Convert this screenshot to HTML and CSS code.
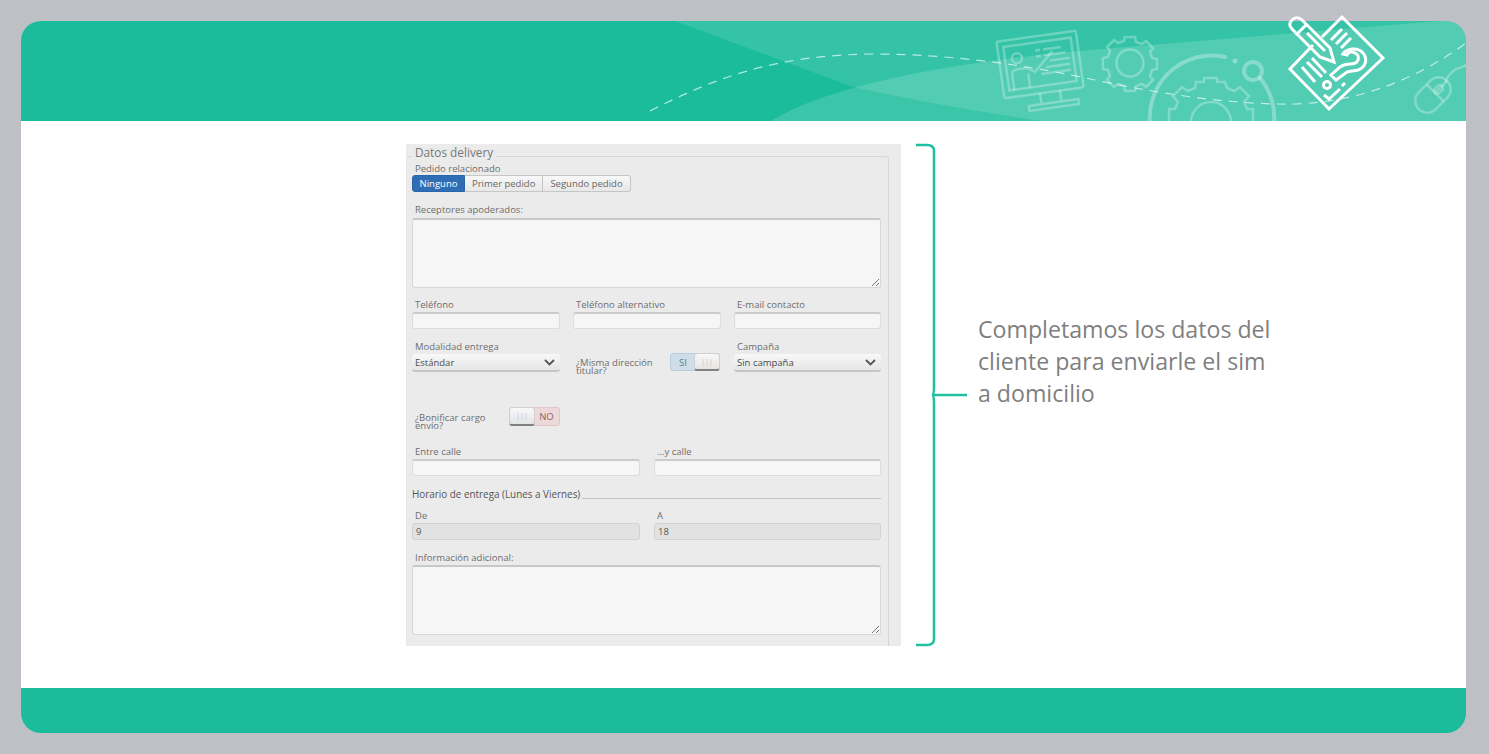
FILE: index.html
```html
<!DOCTYPE html>
<html>
<head>
<title>Datos delivery</title>
<link rel="stylesheet" href="styles.css">
</head>
<body>

<div class="slide">
  <svg class="slide-header" width="1445" height="100" viewBox="21 21 1445 100">
    <defs>
      <clipPath id="header-clip">
        <path d="M21 121V41a20 20 0 0 1 20-20H1446a20 20 0 0 1 20 20V121Z"/>
      </clipPath>
    </defs>
    <g clip-path="url(#header-clip)">
      <rect x="21" y="21" width="1445" height="100" fill="#1bbc9b"/>
      <path d="M675 21L853 87Q950 108 1042 121H1466V21Z" fill="#fff" fill-opacity=".11"/>
      <path d="M770 121C830 85 950 62 1090 50L1440 21H1466V121Z" fill="#fff" fill-opacity=".15"/>
      <path class="dash" d="M650 111C720 75 780 55 873 54C960 54 1040 68 1095 80C1170 96 1240 105 1295 104C1360 102 1420 78 1470 40"/>

      <!-- monitor -->
      <g class="faint" transform="rotate(-8 1040 64)">
        <rect x="1000" y="36" width="80" height="57" rx="2"/>
        <rect x="1006" y="42" width="68" height="44"/>
        <circle cx="1018" cy="55" r="5"/>
        <path d="M1011 86V71q0-5 6-5h9l8 5 20-18M1027 72V86"/>
        <path d="M1037 50h5M1045 50h18M1037 56h5M1045 56h22M1050 62h20M1045 68h25M1040 74h30"/>
        <path d="M1036 93V103M1056 93V103M1023 104h50v5h-50Z"/>
      </g>

      <!-- small gear -->
      <g class="faint">
        <circle cx="1130" cy="63" r="13.500"/>
        <path d="M1125 37h10l1 5 6 2 4-3 7 7-3 4 2 6 5 1v10l-5 1-2 6 3 4-7 7-4-3-6 2-1 5h-10l-1-5-6-2-4 3-7-7 3-4-2-6-5-1V58l5-1 2-6-3-4 7-7 4 3 6-2Z"/>
      </g>

      <!-- big gear and ring -->
      <g class="ring">
        <path d="M1151 130A62 62 0 0 1 1225 57"/>
        <path d="M1260 78A62 62 0 0 1 1273 130"/>
        <circle cx="1253" cy="71" r="9"/>
      </g>
      <circle cx="1235" cy="61" r="2.500" fill="#fff" fill-opacity=".35"/>
      <g class="faint">
        <path d="M1169 130V109h6l3-7-5-6 9-9 6 4 7-3 1-6h8v-4h13v4h8l2 6 7 3 6-4 9 9-5 6 3 7h6v21"/>
        <circle cx="1211" cy="122" r="20"/>
      </g>

      <!-- mouse -->
      <g class="faint" transform="rotate(45 1433 95)">
        <rect x="1421" y="75" width="24" height="40" rx="12"/>
        <path d="M1421 92H1445M1433 75V92"/>
        <rect x="1430" y="82" width="6" height="10" rx="3"/>
      </g>
      <path class="faint" d="M1445 82q6-12 14-14 5-1 9-4"/>
    </g>

    <!-- main icon, goes over the top edge -->
    <g class="main-icon">
      <path d="M1322 37L1342 17 1383 58 1329 109 1290 69 1313 45"/>
      <path d="M1292 29c-3-3-3-6 0-9 3-3 7-3 10 0l28 28 4 14-14-5Z"/>
      <path d="M1296 35l11-11M1307 33l18 18"/>
      <path d="M1331 40l11-11M1336 44l11-11M1341 48l10-10"/>
      <path d="M1302 67l13 15M1307 62l15 15M1312 58l14 15"/>
      <path d="M1343 54c4-6 15-7 20-1 5 6 3 14-5 17-4 1-8 1-11 2l-11 8-5-5 9-8c3-2 7-3 10-3 4 0 7-1 8-4 1-3 0-6-3-7-3-2-7-1-8 2Z"/>
      <circle cx="1327" cy="85" r="3.500"/>
      <path d="M1324 95l5 4 11-10M1342 86l3-3"/>
    </g>
  </svg>

  <div class="slide-body">
    <div class="panel">
      <fieldset class="delivery">
        <legend>Datos delivery</legend>

        <label class="lbl lbl-first">Pedido relacionado</label>
        <div class="btn-group">
          <span class="btn active">Ninguno</span><span class="btn">Primer pedido</span><span class="btn">Segundo pedido</span>
        </div>

        <label class="lbl lbl-area">Receptores apoderados:</label>
        <div class="area"><svg class="grip" width="9" height="9"><path d="M1 8L8 1M5 8L8 5" stroke="#777" fill="none"/></svg></div>

        <div class="row row-3 row-phones">
          <div><label class="lbl">Teléfono</label><div class="field"></div></div>
          <div><label class="lbl">Teléfono alternativo</label><div class="field"></div></div>
          <div><label class="lbl">E-mail contacto</label><div class="field"></div></div>
        </div>

        <div class="row row-3 row-mode">
          <div>
            <label class="lbl">Modalidad entrega</label>
            <div class="select">Estándar
              <svg width="11" height="7"><path d="M1 1l4.500 4.500L10 1" stroke="#555" stroke-width="1.800" fill="none"/></svg>
            </div>
          </div>
          <div class="inline-switch same-address">
            <span class="lbl-tight">¿Misma dirección titular?</span>
            <div class="switch switch-on"><span class="switch-text">SI</span><span class="knob">|||</span></div>
          </div>
          <div>
            <label class="lbl">Campaña</label>
            <div class="select">Sin campaña
              <svg width="11" height="7"><path d="M1 1l4.500 4.500L10 1" stroke="#555" stroke-width="1.800" fill="none"/></svg>
            </div>
          </div>
        </div>

        <div class="row row-3 row-bonus">
          <div class="inline-switch">
            <span class="lbl-tight">¿Bonificar cargo envío?</span>
            <div class="switch switch-off"><span class="knob">|||</span><span class="switch-text">NO</span></div>
          </div>
        </div>

        <div class="row row-2 row-streets">
          <div><label class="lbl">Entre calle</label><div class="field"></div></div>
          <div><label class="lbl">...y calle</label><div class="field"></div></div>
        </div>

        <div class="section-title"><span>Horario de entrega (Lunes a Viernes)</span></div>

        <div class="row row-2 row-hours">
          <div><label class="lbl">De</label><div class="field field-off">9</div></div>
          <div><label class="lbl">A</label><div class="field field-off">18</div></div>
        </div>

        <label class="lbl lbl-area lbl-info">Información adicional:</label>
        <div class="area"><svg class="grip" width="9" height="9"><path d="M1 8L8 1M5 8L8 5" stroke="#777" fill="none"/></svg></div>
      </fieldset>
    </div>

    <svg class="bracket" width="52" height="504" viewBox="0 0 52 504">
      <path d="M0 2H11Q18 2 18 8V244Q18 252 16 252H51M16 252Q18 252 18 260V496Q18 502 11 502H0" fill="none" stroke="#1fc0a0" stroke-width="2.500"/>
    </svg>

    <p class="note">Completamos los datos del cliente para enviarle el sim a domicilio</p>
  </div>

  <div class="slide-footer"></div>
</div>

</body>
</html>
```

FILE: styles.css
```css
body {
  margin: 0;
  background-color: #bdc1c5;
  font-family: "Open Sans", sans-serif;
  height: 754px;
  overflow: hidden;
}

.slide {
  margin: 21px 23px 0 21px;
  width: 1445px;
  height: 712px;
  display: flex;
  flex-direction: column;
}

.slide-header {
  display: block;
  overflow: visible;
  flex: none;
  position: relative;
  z-index: 1;
}

.dash {
  fill: none;
  stroke: #fff;
  stroke-opacity: .65;
  stroke-width: 1.200;
  stroke-dasharray: 9 7;
}

.faint {
  fill: none;
  stroke: #fff;
  stroke-opacity: .28;
  stroke-width: 2.500;
}

.ring {
  fill: none;
  stroke: #fff;
  stroke-opacity: .3;
  stroke-width: 4;
  stroke-linecap: round;
}

.main-icon {
  fill: none;
  stroke: #fff;
  stroke-width: 3;
  stroke-linejoin: miter;
}

.slide-body {
  flex: 1;
  background-color: #fff;
  display: flex;
  align-items: flex-start;
  padding: 23px 0 0 385px;
}

.slide-footer {
  flex: none;
  height: 45px;
  background-color: #1bbc9b;
  border-radius: 0 0 20px 20px;
}

/* form screenshot */
.panel {
  width: 495px;
  height: 502px;
  background-color: #ebebeb;
  flex: none;
  color: #6e6e6e;
  font-size: 9.500px;
  overflow: hidden;
}

.delivery {
  box-sizing: border-box;
  width: 483px;
  height: 502px;
  margin: 0;
  padding: 0 7px 0 5px;
  border: 1px solid #d6d6d6;
  border-left-color: #e6e6e6;
  border-bottom: none;
  border-radius: 3px 3px 0 0;
}

.delivery legend {
  margin-left: 0;
  padding: 0 3px 8px;
  font-size: 11.800px;
  line-height: 16px;
  color: #777;
}

.lbl {
  display: block;
  padding-left: 3px;
  line-height: 16px;
  height: 14px;
  white-space: nowrap;
}

.lbl-first {
  margin-top: -7px;
}

.btn-group {
  display: flex;
  height: 17px;
  margin-top: 0;
}

.btn {
  box-sizing: border-box;
  padding: 0 7px;
  line-height: 15px;
  border: 1px solid #c6c6c6;
  border-left: none;
  background: linear-gradient(#f8f8f8, #e8e8e8);
  color: #666;
}

.btn:last-child {
  border-radius: 0 3px 3px 0;
}

.btn.active {
  width: 53px;
  text-align: center;
  padding: 0;
  background-color: #2f6eb5;
  background-image: none;
  border: 1px solid #2a66aa;
  border-radius: 3px 0 0 3px;
  color: #fff;
}

.lbl-area {
  margin-top: 10px;
}

.area {
  box-sizing: border-box;
  height: 70px;
  margin-top: 2px;
  background-color: #f6f6f6;
  border: 1px solid #d8d8d8;
  border-top: 2px solid #c8c8c8;
  border-radius: 3px;
  display: flex;
  align-items: flex-end;
  justify-content: flex-end;
}

.grip {
  display: block;
}

.row {
  display: grid;
}

.row-3 {
  grid-template-columns: 148px 148px 147px;
  column-gap: 13px;
}

.row-2 {
  grid-template-columns: 228px 227px;
  column-gap: 14px;
}

.row-phones {
  margin-top: 9px;
}

.row-mode {
  margin-top: 10px;
}

.row-bonus {
  margin-top: 31px;
  height: 19px;
}

.row-streets {
  margin-top: 22px;
}

.row-hours {
  margin-top: 9px;
}

.lbl-info {
  margin-top: 9px;
  line-height: 18px;
}

.field {
  box-sizing: border-box;
  height: 17px;
  margin-top: 1px;
  padding-left: 3px;
  line-height: 14px;
  background-color: #f6f6f6;
  border: 1px solid #dcdcdc;
  border-top: 2px solid #cbcbcb;
  border-radius: 3px;
}

.field-off {
  background-color: #e2e2e2;
  border: 1px solid #d2d2d2;
  line-height: 15px;
  color: #555;
}

.select {
  box-sizing: border-box;
  height: 18px;
  padding: 0 5px 0 3px;
  line-height: 15px;
  margin-top: 1px;
  display: flex;
  justify-content: space-between;
  align-items: center;
  color: #4c4c4c;
  background: linear-gradient(#f8f8f8, #e6e6e6);
  border-bottom: 2px solid #c6c6c6;
  border-radius: 3px;
}

.inline-switch {
  display: flex;
  align-items: center;
  justify-content: space-between;
  padding-left: 3px;
}

.same-address {
  margin-top: 14px;
  height: 18px;
}

.lbl-tight {
  width: 82px;
  line-height: 8px;
}

.same-address .lbl-tight {
  margin-top: 9px;
}

.row-bonus .lbl-tight {
  margin-top: 11px;
  width: 80px;
}

.switch {
  box-sizing: border-box;
  width: 51px;
  height: 19px;
  display: flex;
  flex: none;
  border-radius: 3px;
  line-height: 17px;
}

.same-address .switch {
  width: 50px;
  height: 18px;
  margin-right: 1px;
}

.switch-on {
  background-color: #cfdde8;
  border: 1px solid #b9ccdb;
  color: #5c7f9a;
}

.switch-off {
  background-color: #edd9d9;
  border: 1px solid #e3c5c5;
  color: #8a6464;
}

.switch-text {
  flex: 1;
  text-align: center;
}

.knob {
  box-sizing: border-box;
  width: 26px;
  margin: -1px;
  text-align: center;
  font-size: 7px;
  line-height: 15px;
  color: #bbb;
  background: linear-gradient(#f8f8f8, #e4e4e4);
  border: 1px solid #d0d0d0;
  border-bottom: 2px solid #808080;
  border-radius: 3px;
}

.section-title {
  margin-top: 10px;
  height: 12px;
  font-size: 9.900px;
  line-height: 17px;
  color: #555;
  border-bottom: 1px solid #c4c4c4;
}

.section-title span {
  display: inline-block;
  background-color: #ebebeb;
  padding-right: 2px;
  height: 17px;
}

.bracket {
  flex: none;
  margin: -1px 0 0 15px;
}

.note {
  margin: 169px 0 0 10px;
  width: 300px;
  font-size: 23.150px;
  line-height: 32px;
  color: #7f7f7f;
}
```
